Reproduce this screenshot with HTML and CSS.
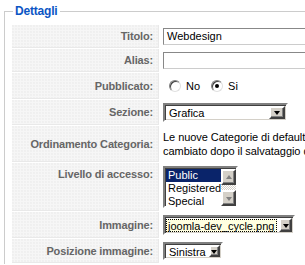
FILE: index.html
```html
<!DOCTYPE html>
<html>
<head>
<meta charset="utf-8">
<link rel="stylesheet" href="styles.css">
</head>
<body>
<fieldset class="details">
  <legend class="legend">Dettagli</legend>
  <table class="admintable">
    <tr class="r-titolo">
      <td class="key">Titolo:</td>
      <td class="val"><div class="textbox">Webdesign</div></td>
    </tr>
    <tr class="r-alias">
      <td class="key">Alias:</td>
      <td class="val"><div class="textbox"></div></td>
    </tr>
    <tr class="r-pub">
      <td class="key">Pubblicato:</td>
      <td class="val">
        <div class="radios">
          <span class="radio"></span><span class="rlabel">No</span>
          <span class="radio checked"></span><span class="rlabel">Si</span>
        </div>
      </td>
    </tr>
    <tr class="r-sez">
      <td class="key">Sezione:</td>
      <td class="val"><div class="select sel-sez"><span class="sel-text">Grafica</span><span class="arrow"><i></i></span></div></td>
    </tr>
    <tr class="r-ord">
      <td class="key">Ordinamento Categoria:</td>
      <td class="val note">Le nuove Categorie di default sono posizionate all'ultimo posto. L'ordinamento può essere<br>cambiato dopo il salvataggio di questa Categoria.</td>
    </tr>
    <tr class="r-liv">
      <td class="key top">Livello di accesso:</td>
      <td class="val">
        <div class="listbox">
          <div class="items">
            <div class="item selected">Public</div>
            <div class="item">Registered</div>
            <div class="item">Special</div>
          </div>
          <div class="scrollbar">
            <span class="sbtn up"><i></i></span>
            <span class="track"></span>
            <span class="sbtn down"><i></i></span>
          </div>
        </div>
      </td>
    </tr>
    <tr class="r-img">
      <td class="key">Immagine:</td>
      <td class="val"><div class="select sel-img"><span class="sel-text focus">joomla-dev_cycle.png</span><span class="arrow"><i></i></span></div></td>
    </tr>
    <tr class="r-pos">
      <td class="key">Posizione immagine:</td>
      <td class="val"><div class="select sel-pos"><span class="sel-text">Sinistra</span><span class="arrow"><i></i></span></div></td>
    </tr>
  </table>
</fieldset>
</body>
</html>
```

FILE: styles.css
```css
html, body {
  margin: 0;
  padding: 0;
  background: #fff;
  overflow: hidden;
}
body {
  font-family: "Liberation Sans", Arial, sans-serif;
  font-size: 11px;
  color: #000;
  width: 1400px;
}
.details {
  margin: 4px 0 0 4px;
  padding: 6px 7px 0 7px;
  border: 1px solid #ccc;
  border-bottom: none;
  min-width: 0;
}
.legend {
  color: #0b55c4;
  font-weight: bold;
  font-size: 12px;
  letter-spacing: -0.2px;
  padding: 0 3px 0 2px;
  margin-left: 1px;
}
.admintable {
  border-collapse: separate;
  border-spacing: 1px;
  margin-left: -1px;
}
.admintable td {
  padding: 0;
}
.key {
  width: 136px;
  min-width: 136px;
  padding: 3px 5px 3px 5px !important;
  text-align: right;
  font-weight: bold;
  letter-spacing: -0.15px;
  color: #666;
  white-space: nowrap;
  background-color: #f6f6f6;
  background-image:
    radial-gradient(circle at 1px 1px, #ececec 0.6px, transparent 0.9px);
  background-size: 3px 3px;
  border-bottom: 1px solid #e9e9e9;
  border-right: 1px solid #e9e9e9;
  vertical-align: middle;
}
.key.top {
  vertical-align: top;
  padding-top: 5px !important;
}
.val {
  padding: 3px 3px !important;
  white-space: nowrap;
  vertical-align: middle;
}
.note {
  font-size: 11px;
  letter-spacing: -0.05px;
  line-height: 14px;
  color: #000;
  padding: 4px 3px !important;
}
.textbox {
  width: 300px;
  height: 15px;
  border: 1px solid #888;
  border-right-color: #ccc;
  border-bottom-color: #ccc;
  font-size: 11px;
  line-height: 15px;
  padding-left: 3px;
}
.radios {
  display: flex;
  align-items: center;
  height: 20px;
  padding-left: 6px;
}
.radio {
  width: 10px;
  height: 10px;
  border-radius: 50%;
  border: 1px solid #808080;
  border-right-color: #e0e0e0;
  border-bottom-color: #e0e0e0;
  box-shadow: inset 1px 1px 0 #404040;
  background: #fff;
  position: relative;
  flex: none;
}
.radio.checked::after {
  content: "";
  position: absolute;
  left: 3px;
  top: 3px;
  width: 4px;
  height: 4px;
  border-radius: 50%;
  background: #000;
}
.rlabel {
  font-size: 11px;
  margin: 0 11px 0 5px;
}
.select {
  display: flex;
  align-items: stretch;
  border: 2px solid;
  border-color: #808080 #fff #fff #808080;
  box-shadow: inset 1px 1px 0 #404040, inset -1px -1px 0 #d4d0c8;
  background: #fff;
  font-size: 11px;
}
.sel-text {
  flex: 1;
  padding: 0 3px 0 3px;
  display: flex;
  align-items: center;
  margin: 1px 0 0 1px;
}
.sel-text.focus {
  background: #ffffe0;
  outline: 1px dotted #000;
  outline-offset: -1px;
  margin: 2px 2px 1px 1px;
  padding-left: 2px;
}
.arrow {
  width: 12px;
  margin: 1px 1px 1px 0;
  background: #d4d0c8;
  border: 2px solid;
  border-color: #fff #404040 #404040 #fff;
  box-shadow: inset -1px -1px 0 #808080;
  display: flex;
  align-items: center;
  justify-content: center;
}
.arrow i, .sbtn.down i {
  width: 0;
  height: 0;
  border-left: 3.5px solid transparent;
  border-right: 3.5px solid transparent;
  border-top: 4px solid #000;
  margin-top: 1px;
}
.sel-sez { width: 121px; height: 15px; }
.sel-img { width: 128px; height: 16px; }
.sel-pos { width: 56px; height: 14px; }
.listbox {
  display: flex;
  width: 71px;
  height: 38px;
  border: 2px solid;
  border-color: #808080 #fff #fff #808080;
  box-shadow: inset 1px 1px 0 #404040;
  background: #fff;
}
.items {
  flex: 1;
  padding: 1px 0 0 1px;
  font-size: 11px;
  line-height: 13px;
}
.item { padding-left: 2px; }
.item.selected {
  background: #0a246a;
  color: #fff;
}
.scrollbar {
  width: 16px;
  display: flex;
  flex-direction: column;
  margin: 1px 0 0 0;
}
.sbtn {
  height: 12px;
  background: #d4d0c8;
  border: 2px solid;
  border-color: #fff #404040 #404040 #fff;
  box-shadow: inset -1px -1px 0 #808080;
  display: flex;
  align-items: center;
  justify-content: center;
}
.sbtn.up i {
  width: 0;
  height: 0;
  border-left: 3.5px solid transparent;
  border-right: 3.5px solid transparent;
  border-bottom: 4px solid #808080;
}
.sbtn.down i { border-top-color: #808080; }
.track {
  flex: 1;
  background-color: #fff;
  background-image: repeating-conic-gradient(#d4d0c8 0 25%, #fff 0 50%);
  background-size: 2px 2px;
}
```
